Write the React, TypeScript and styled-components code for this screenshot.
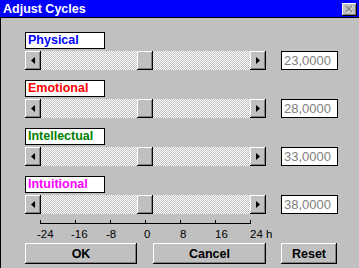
import React from 'react'
import styled, { createGlobalStyle } from 'styled-components'

const GlobalStyle = createGlobalStyle`
	html, body {
		margin: 0;
		padding: 0;
		background: #c0c0c0;
	}
	body {
		font-family: "Liberation Sans", Arial, sans-serif;
	}
`

interface Cycle {
	id: string
	name: string
	color: string
	days: string
	shift: number
}

const cycles: Cycle[] = [
	{ id: 'p', name: 'Physical', color: '#0000ff', days: '23,0000', shift: 0 },
	{ id: 'e', name: 'Emotional', color: '#ff0000', days: '28,0000', shift: 0 },
	{ id: 'i', name: 'Intellectual', color: '#008000', days: '33,0000', shift: 0 },
	{ id: 'u', name: 'Intuitional', color: '#ff00ff', days: '38,0000', shift: 0 },
]

const TRACK = 209
const THUMB = 16

const ArrowIcon: React.FC<{ dir: 'left' | 'right' }> = ({ dir }) => (
	<svg width="4" height="7" viewBox="0 0 4 7">
		{dir === 'left' ? <polygon points="4,0 4,7 0,3.5" fill="#000" /> : <polygon points="0,0 0,7 4,3.5" fill="#000" />}
	</svg>
)

const ScrollBar: React.FC<{ value: number }> = ({ value }) => {
	const left = Math.floor(((value + 24) / 48) * (TRACK - THUMB))
	return (
		<Bar>
			<ArrowButton>
				<ArrowIcon dir="left" />
			</ArrowButton>
			<Track>
				<Thumb style={{ left }} />
			</Track>
			<ArrowButton>
				<ArrowIcon dir="right" />
			</ArrowButton>
		</Bar>
	)
}

const ticks = [
	{ x: 15, label: '-24', tx: 12 },
	{ x: 50, label: '-16', tx: 46 },
	{ x: 85, label: '-8', tx: 81 },
	{ x: 120, label: '0', tx: 119 },
	{ x: 155, label: '8', tx: 155 },
	{ x: 190, label: '16', tx: 190 },
	{ x: 225, label: '24 h', tx: 225 },
]

const Ruler = () => (
	<RulerSvg width="260" height="29" viewBox="0 0 260 29">
		<line x1="15" y1="9.5" x2="226" y2="9.5" stroke="#000" strokeWidth="1" />
		{ticks.map((t) => (
			<g key={t.label}>
				<line x1={t.x + 0.5} y1="6" x2={t.x + 0.5} y2="10" stroke="#000" strokeWidth="1" />
				<text x={t.tx} y="24">
					{t.label}
				</text>
			</g>
		))}
	</RulerSvg>
)

export default function App() {
	return (
		<Window>
			<GlobalStyle />
			<TitleBar>
				<Title>Adjust Cycles</Title>
				<CloseButton>
					<svg width="9" height="8" viewBox="0 0 9 8">
						<path d="M1.5 1.5 L7.5 7.5 M7.5 1.5 L1.5 7.5" stroke="#fff" strokeWidth="1.4" />
						<path d="M1 1 L7 7 M7 1 L1 7" stroke="#808080" strokeWidth="1.4" />
					</svg>
				</CloseButton>
			</TitleBar>

			<Body>
				<Rows>
					{cycles.map((cycle) => (
						<CycleRow key={cycle.id}>
							<NameBox $color={cycle.color}>{cycle.name}</NameBox>
							<ScrollBar value={cycle.shift} />
							<ValueBox>{cycle.days}</ValueBox>
						</CycleRow>
					))}
				</Rows>

				<Ruler />

				<Buttons>
					<PushButton $width={112}>OK</PushButton>
					<PushButton $width={113}>Cancel</PushButton>
					<PushButton $width={56}>Reset</PushButton>
				</Buttons>
			</Body>
		</Window>
	)
}

const Window = styled.div`
	width: 359px;
	height: 268px;
	background: #c0c0c0;
	display: flex;
	flex-direction: column;
	overflow: hidden;
`

const TitleBar = styled.div`
	height: 17px;
	background: #0000ff;
	border-bottom: 1px solid #000;
	display: flex;
	align-items: center;
	justify-content: space-between;
	padding: 0 2px 0 3px;
`

const Title = styled.span`
	color: #fff;
	font-weight: bold;
	font-size: 12.5px;
`

const CloseButton = styled.div`
	width: 15px;
	height: 13px;
	margin-top: 1px;
	box-sizing: border-box;
	background: #c0c0c0;
	box-shadow: inset -1px -1px #000, inset 1px 1px #fff, inset -2px -2px #808080;
	display: flex;
	align-items: center;
	justify-content: center;
`

const Body = styled.div`
	flex: 1;
	border-left: 1px solid #000;
	padding: 14px 0 0 24px;
	display: flex;
	flex-direction: column;
`

const Rows = styled.div`
	display: flex;
	flex-direction: column;
	gap: 10px;
`

const CycleRow = styled.div`
	display: grid;
	grid-template-columns: 241px 57px;
	grid-template-rows: 17px 19px;
	column-gap: 15px;
	row-gap: 2px;
`

const NameBox = styled.div<{ $color: string }>`
	grid-column: 1;
	grid-row: 1;
	width: 80px;
	box-sizing: border-box;
	border: 1px solid #000;
	background: #fff;
	color: ${(p) => p.$color};
	font-weight: bold;
	font-size: 12.5px;
	line-height: 15px;
	padding-left: 2px;
	white-space: nowrap;
	overflow: hidden;
`

const Bar = styled.div`
	grid-column: 1;
	grid-row: 2;
	display: flex;
	height: 19px;
`

const bevel = `
	background: #c0c0c0;
	box-sizing: border-box;
	box-shadow: inset -1px -1px #000, inset 1px 1px #fff, inset -2px -2px #808080;
`

const ArrowButton = styled.div`
	${bevel}
	width: 16px;
	height: 19px;
	display: flex;
	align-items: center;
	justify-content: center;
	padding-bottom: 1px;
`

const Track = styled.div`
	position: relative;
	flex: 1;
	background: repeating-conic-gradient(#c0c0c0 0 25%, #ffffff 0 50%) 0 0 / 2px 2px;
`

const Thumb = styled.div`
	${bevel}
	position: absolute;
	top: 0;
	width: 16px;
	height: 19px;
`

const ValueBox = styled.div`
	grid-column: 2;
	grid-row: 2;
	box-sizing: border-box;
	border: 1px solid #000;
	background: #fff;
	color: #808080;
	font-size: 13px;
	line-height: 17px;
	padding-left: 2px;
`

const RulerSvg = styled.svg`
	display: block;

	text {
		font-family: "Liberation Sans", Arial, sans-serif;
		font-size: 11.5px;
		fill: #000;
	}
`

const Buttons = styled.div`
	display: flex;
	gap: 16px;

	& > :last-child {
		margin-left: -1px;
	}
`

const PushButton = styled.button<{ $width: number }>`
	${bevel}
	width: ${(p) => p.$width}px;
	height: 21px;
	border: none;
	padding: 0;
	font-family: "Liberation Sans", Arial, sans-serif;
	font-weight: bold;
	font-size: 12.5px;
	color: #000;
`
